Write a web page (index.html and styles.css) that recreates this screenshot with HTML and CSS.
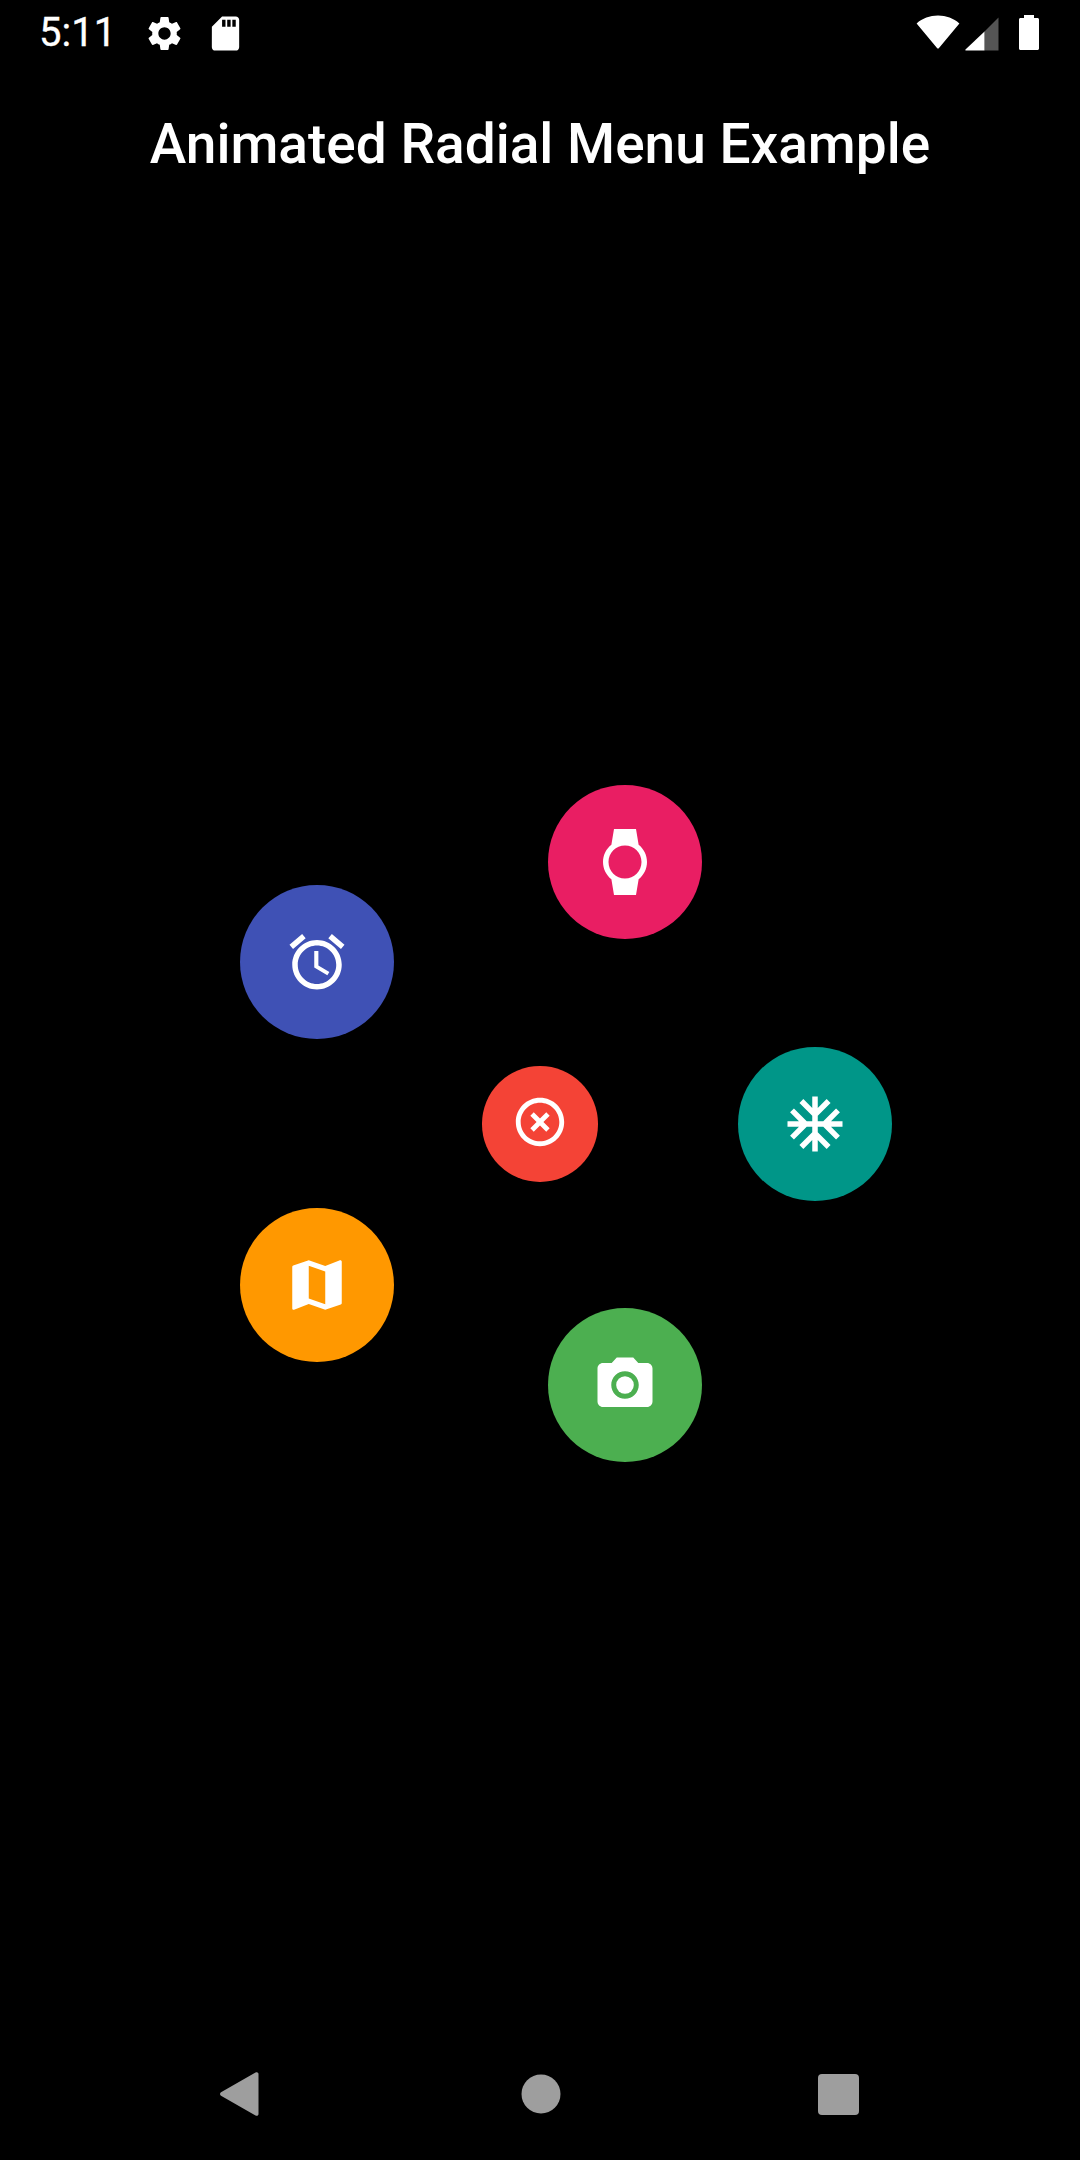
FILE: index.html
```html
<!DOCTYPE html>
<html lang="en">
<head>
<meta charset="utf-8">
<title>Animated Radial Menu Example</title>
<link rel="stylesheet" href="styles.css">
</head>
<body>
<div class="app">
  <header class="status">
    <span class="time">5:11</span>
    <svg class="sicon gear" viewBox="0 0 24 24"><path d="M19.14 12.94c.04-.3.06-.61.06-.94 0-.32-.02-.64-.07-.94l2.03-1.58c.18-.14.23-.41.12-.61l-1.92-3.32c-.12-.22-.37-.29-.59-.22l-2.39.96c-.5-.38-1.03-.7-1.62-.94l-.36-2.54c-.04-.24-.24-.41-.48-.41h-3.84c-.24 0-.43.17-.47.41l-.36 2.54c-.59.24-1.13.57-1.62.94l-2.39-.96c-.22-.08-.47 0-.59.22L2.74 8.87c-.12.21-.08.47.12.61l2.03 1.58c-.05.3-.09.63-.09.94s.02.64.07.94l-2.03 1.58c-.18.14-.23.41-.12.61l1.92 3.32c.12.22.37.29.59.22l2.39-.96c.5.38 1.03.7 1.62.94l.36 2.54c.05.24.24.41.48.41h3.84c.24 0 .44-.17.47-.41l.36-2.54c.59-.24 1.13-.56 1.62-.94l2.39.96c.22.08.47 0 .59-.22l1.92-3.32c.12-.22.07-.47-.12-.61l-2.01-1.58zM12 15.6c-1.98 0-3.6-1.62-3.6-3.6s1.62-3.6 3.6-3.6 3.6 1.62 3.6 3.6-1.62 3.6-3.6 3.6z"/></svg>
    <svg class="sicon sd" viewBox="0 0 24 24"><path d="M18 2h-8L4.02 8 4 20c0 1.1.9 2 2 2h12c1.1 0 2-.9 2-2V4c0-1.1-.9-2-2-2zm-6 6h-2V4h2v4zm3 0h-2V4h2v4zm3 0h-2V4h2v4z"/></svg>
    <div class="status-right">
      <svg class="wifi" viewBox="0 0 44 34"><path d="M0.6 8.4C6.5 3.4 13.8 0.5 22 0.5s15.500 2.900 21.400 7.900L23 33c-.5.7-1.500.7-2 0z"/></svg>
      <svg class="cell" viewBox="0 0 34 34"><path class="cell-off" d="M33.500 0.500V33.500H19.500V14.500z"/><path d="M19.500 14.500V33.500H1c-.6 0-.9-.7-.5-1.100z"/></svg>
      <svg class="battery" viewBox="0 0 20 35"><path d="M5 0h10v3h3.500c.8 0 1.500.7 1.500 1.500V33.500c0 .8-.7 1.500-1.500 1.500H1.500C.7 35 0 34.300 0 33.500V4.500C0 3.700.7 3 1.500 3H5z"/></svg>
    </div>
  </header>
  <h1 class="title">Animated Radial Menu Example</h1>
  <main class="stage">
    <div class="item watch"><svg class="icon" viewBox="0 0 24 24"><path d="M20 12c0-2.540-1.190-4.810-3.040-6.270L16 0H8l-.95 5.730C5.190 7.190 4 9.450 4 12s1.190 4.810 3.050 6.270L8 24h8l.96-5.730C18.810 16.810 20 14.540 20 12zM6 12c0-3.310 2.690-6 6-6s6 2.690 6 6-2.690 6-6 6-6-2.690-6-6z"/></svg></div>
    <div class="item alarm"><svg class="icon" viewBox="0 0 24 24"><path d="M22 5.720l-4.600-3.860-1.290 1.530 4.600 3.860L22 5.720zM7.880 3.390L6.600 1.860 2 5.710l1.290 1.530 4.590-3.850zM12.500 8H11v6l4.750 2.850.75-1.230-4-2.370V8zM12 4c-4.970 0-9 4.030-9 9s4.030 9 9 9 9-4.030 9-9-4.030-9-9-9zm0 16c-3.870 0-7-3.130-7-7s3.130-7 7-7 7 3.130 7 7-3.130 7-7 7z"/></svg></div>
    <div class="item snow"><svg class="icon" viewBox="0 0 24 24"><path d="M22 11h-4.170l3.240-3.240-1.410-1.420L15 11h-2V9l4.660-4.660-1.420-1.410L13 6.170V2h-2v4.170L7.760 2.930 6.340 4.340 11 9v2H9L4.340 6.340 2.930 7.760 6.170 11H2v2h4.170l-3.240 3.240 1.410 1.420L9 13h2v2l-4.660 4.660 1.420 1.410L11 17.830V22h2v-4.170l3.240 3.240 1.420-1.410L13 15v-2h2l4.660 4.660 1.410-1.420L17.830 13H22z"/></svg></div>
    <div class="item map"><svg class="icon" viewBox="0 0 24 24"><path d="M20.500 3l-.16.03L15 5.100 9 3 3.360 4.900c-.21.07-.36.25-.36.48V20.500c0 .28.22.5.5.5l.16-.03L9 18.900l6 2.100 5.640-1.900c.21-.07.36-.25.36-.48V3.500c0-.28-.22-.5-.5-.5zM15 19l-6-2.110V5l6 2.110V19z"/></svg></div>
    <div class="item camera"><svg class="icon" viewBox="0 0 24 24"><circle cx="12" cy="12" r="3.200"/><path d="M9 2L7.170 4H4c-1.100 0-2 .9-2 2v12c0 1.100.9 2 2 2h16c1.100 0 2-.9 2-2V6c0-1.100-.9-2-2-2h-3.170L15 2H9zm3 15c-2.760 0-5-2.240-5-5s2.240-5 5-5 5 2.240 5 5-2.240 5-5 5z"/></svg></div>
    <div class="close"><svg class="close-icon" viewBox="0 0 24 24"><path d="M14.590 8L12 10.590 9.410 8 8 9.410 10.590 12 8 14.590 9.410 16 12 13.410 14.590 16 16 14.590 13.410 12 16 9.410 14.590 8zM12 2C6.470 2 2 6.470 2 12s4.470 10 10 10 10-4.470 10-10S17.530 2 12 2zm0 18c-4.410 0-8-3.590-8-8s3.590-8 8-8 8 3.590 8 8-3.590 8-8 8z"/></svg></div>
  </main>
  <nav class="nav">
    <svg class="nav-back" viewBox="0 0 39 44"><path d="M1 20.300 35.500.6C37 -.3 38.500.5 38.500 2V42c0 1.500-1.500 2.300-3 1.400L1 23.700c-1.300-.9-1.300-2.500 0-3.400z"/></svg>
    <svg class="nav-home" viewBox="0 0 40 40"><circle cx="20" cy="20" r="19.500"/></svg>
    <svg class="nav-recent" viewBox="0 0 41 41"><rect x="0" y="0" width="41" height="41" rx="4"/></svg>
  </nav>
</div>
</body>
</html>
```
FILE: styles.css
```css
* { box-sizing: border-box; }
html, body { margin: 0; padding: 0; background: #000; }
.app {
  width: 1080px;
  height: 2160px;
  display: flex;
  flex-direction: column;
  background: #000;
  color: #fff;
  font-family: Roboto, "Liberation Sans", sans-serif;
  overflow: hidden;
}
svg { display: block; fill: currentColor; flex: none; }

.status {
  height: 66px;
  display: flex;
  align-items: center;
  padding-left: 39px;
  flex: none;
}
.time { font-size: 40px; line-height: 66px; width: 105px; -webkit-text-stroke: 0.3px #fff; }
.sicon { width: 41px; height: 41px; }
.sd { margin-left: 20px; }
.status-right {
  margin-left: auto;
  padding-right: 41px;
  display: flex;
  align-items: flex-start;
  height: 66px;
}
.wifi { width: 44px; height: 34px; margin-top: 15px; }
.cell { width: 34px; height: 34px; margin: 16.500px 0 0 5px; }
.cell-off { fill: #555; }
.battery { width: 20px; height: 35px; margin: 15px 0 0 20px; }

.title {
  margin: 0;
  height: 154px;
  flex: none;
  display: flex;
  align-items: center;
  justify-content: center;
  font-size: 55px;
  font-weight: 500;
  padding-top: 2px;
}

.stage { position: relative; flex: 1; }
.item, .close {
  position: absolute;
  border-radius: 50%;
  display: flex;
  align-items: center;
  justify-content: center;
}
.item { width: 154px; height: 154px; }
.icon { width: 66px; height: 66px; }
.watch { left: 548px; top: 565px; background: #e91e63; }
.alarm { left: 240px; top: 665px; background: #3f51b5; }
.snow { left: 738px; top: 827px; background: #009688; }
.map { left: 240px; top: 988.300px; background: #ff9800; }
.camera { left: 548px; top: 1088.300px; background: #4caf50; }
.close {
  left: 482.250px;
  top: 846.250px;
  width: 115.500px;
  height: 115.500px;
  background: #f44336;
}
.close-icon { width: 58px; height: 58px; margin-bottom: 4px; }

.nav {
  height: 132px;
  flex: none;
  display: flex;
  align-items: center;
  color: #9e9e9e;
  padding-left: 220px;
}
.nav-back { width: 39px; height: 44px; }
.nav-home { width: 40px; height: 40px; margin-left: 262px; }
.nav-recent { width: 41px; height: 41px; margin-left: 257px; }
```
